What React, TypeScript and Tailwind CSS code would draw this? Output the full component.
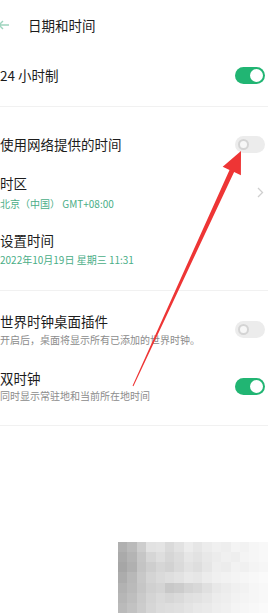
import React from 'react';

const font = { fontFamily: '"Noto Sans CJK SC", "Noto Sans", sans-serif' };

const Toggle = ({ on }: { on: boolean }) =>
  on ? (
    <div className="flex h-[17px] w-[30px] items-center justify-end rounded-full bg-[#21b573] pr-[2px]">
      <div className="h-[13px] w-[13px] rounded-full bg-white" />
    </div>
  ) : (
    <div className="flex h-[17px] w-[30px] items-center rounded-full bg-[#ececec] pl-[3px]">
      <div className="h-[11px] w-[11px] rounded-full border-[2px] border-[#d4d4d4] bg-[#f7f7f7]" />
    </div>
  );

const Divider = ({ className }: { className: string }) => (
  <div className={`h-px w-full bg-[#f1f1f1] ${className}`} />
);

// rough copy of the pixelated watermark in the bottom corner
const mosaic = [
  [176, 186, 205, 226, 228, 218, 226, 236, 230, 236, 240, 238, 244, 242, 246, 248],
  [170, 180, 198, 214, 222, 214, 220, 230, 226, 232, 236, 240, 238, 244, 246, 248],
  [166, 176, 196, 206, 214, 210, 218, 226, 222, 230, 238, 236, 242, 240, 244, 246],
  [172, 184, 200, 212, 218, 222, 226, 232, 230, 236, 240, 242, 244, 246, 248, 250],
  [178, 186, 198, 208, 212, 200, 204, 212, 216, 224, 232, 236, 240, 242, 246, 248],
  [182, 190, 202, 212, 218, 214, 218, 224, 226, 230, 236, 238, 242, 244, 246, 248],
  [186, 194, 204, 214, 220, 222, 224, 228, 232, 234, 238, 240, 244, 246, 248, 250],
];

export default function App() {
  return (
    <div className="relative h-[613px] w-[268px] overflow-hidden bg-white" style={font}>
      {/* Header */}
      <div className="flex h-[50px] items-center">
        <svg width="12" height="12" viewBox="0 0 12 12" className="-ml-[2px]">
          <path d="M11 6H1M5 2L1 6l4 4" fill="none" stroke="#9dd4bd" strokeWidth="1.4" />
        </svg>
        <span className="ml-[18px] text-[13.5px] text-[#1c1c1c]">日期和时间</span>
      </div>

      {/* 24h */}
      <div className="flex h-[50px] items-center justify-between pr-[3px]">
        <span className="text-[13.5px] text-[#1c1c1c]">24 小时制</span>
        <Toggle on />
      </div>
      <Divider className="mt-[6px]" />

      {/* network time */}
      <div className="mt-[27px] flex h-[20px] items-center justify-between pr-[3px]">
        <span className="text-[13.5px] text-[#1c1c1c]">使用网络提供的时间</span>
        <Toggle on={false} />
      </div>

      {/* time zone */}
      <div className="mt-[20px] flex items-center justify-between pr-[4px]">
        <div className="flex flex-col">
          <span className="h-[18px] text-[13.5px] leading-[18px] text-[#1c1c1c]">时区</span>
          <span className="mt-[5px] h-[14px] text-[10px] leading-[14px] text-[#4aae87]">
            北京（中国） GMT+08:00
          </span>
        </div>
        <svg width="7" height="11" viewBox="0 0 7 11">
          <path d="M1 1l4.5 4.5L1 10" fill="none" stroke="#cfcfcf" strokeWidth="1.3" />
        </svg>
      </div>

      {/* set time */}
      <div className="mt-[20px] flex flex-col">
        <span className="h-[18px] text-[13.5px] leading-[18px] text-[#1c1c1c]">设置时间</span>
        <span className="mt-[4px] h-[14px] text-[10px] leading-[14px] text-[#4aae87]">
          2022年10月19日 星期三 11:31
        </span>
      </div>
      <Divider className="mt-[23px]" />

      {/* world clock */}
      <div className="mt-[21px] flex items-center justify-between pr-[3px]">
        <div className="flex flex-col">
          <span className="h-[18px] text-[13.5px] leading-[18px] text-[#1c1c1c]">世界时钟桌面插件</span>
          <span className="mt-[3px] h-[14px] text-[10px] leading-[14px] text-[#8c8c8c]">
            开启后，桌面将显示所有已添加的世界时钟。
          </span>
        </div>
        <Toggle on={false} />
      </div>

      {/* dual clock */}
      <div className="mt-[22px] flex items-center justify-between pr-[3px]">
        <div className="flex flex-col">
          <span className="h-[18px] text-[13.5px] leading-[18px] text-[#1c1c1c]">双时钟</span>
          <span className="mt-[2px] h-[14px] text-[10px] leading-[14px] text-[#8c8c8c]">
            同时显示常驻地和当前所在地时间
          </span>
        </div>
        <Toggle on />
      </div>
      <Divider className="mt-[22px]" />

      {/* blurred watermark */}
      <div className="ml-[118px] mt-[116px] flex h-[71px] flex-col">
        {mosaic.map((row, r) => (
          <div key={r} className="flex flex-1">
            {row.map((g, c) => (
              <div key={c} className="flex-1" style={{ backgroundColor: `rgb(${g},${g},${g})` }} />
            ))}
          </div>
        ))}
      </div>

      {/* red annotation arrow */}
      <svg
        className="pointer-events-none absolute left-0 top-0"
        width="268"
        height="613"
        viewBox="0 0 268 613"
      >
        <polygon
          points="241,151 240.9,175.2 234.1,172 133.45,386.2 132.55,385.8 229.5,169.9 222.7,166.8"
          fill="#ee3535"
        />
      </svg>
    </div>
  );
}
